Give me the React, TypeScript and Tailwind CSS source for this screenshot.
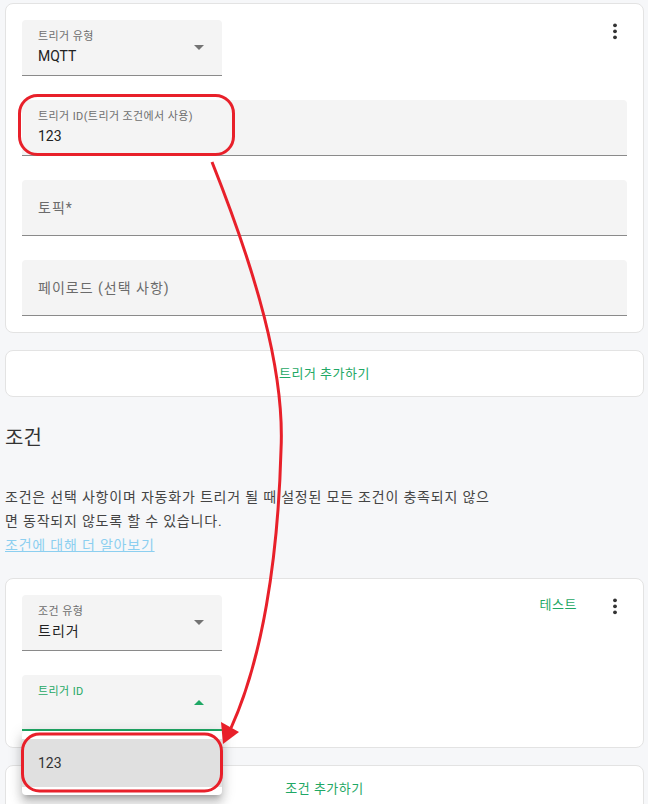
const green = "text-[#1fa865]";

function Kebab() {
  return (
    <svg width="24" height="24" viewBox="0 0 24 24" className="-mt-px shrink-0">
      <circle cx="12" cy="6.3" r="1.9" fill="#333" />
      <circle cx="12" cy="12.3" r="1.9" fill="#333" />
      <circle cx="12" cy="18.3" r="1.9" fill="#333" />
    </svg>
  );
}

function Caret({ up = false, color = "#737373" }: { up?: boolean; color?: string }) {
  return (
    <svg width="10" height="5" viewBox="0 0 10 5" className="shrink-0">
      <polygon points={up ? "0,5 10,5 5,0" : "0,0 10,0 5,5"} fill={color} />
    </svg>
  );
}

function SelectField({ label, value, ko = false }: { label: string; value: string; ko?: boolean }) {
  return (
    <div className="flex h-[56px] w-[200px] items-center justify-between rounded-t-[4px] border-b border-[#8a8a8a] bg-[#f4f4f4] pl-4 pr-[18px]">
      <div className="self-start pt-[10px]">
        <div className="text-[11px] leading-[13px] tracking-[0.4px] text-[#6e6e6e]">{label}</div>
        <div className={`mt-[3px] text-[14px] leading-[20px] text-[#222] ${ko ? "tracking-[1px]" : ""}`}>{value}</div>
      </div>
      <Caret />
    </div>
  );
}

function PlaceholderField({ placeholder }: { placeholder: string }) {
  return (
    <div className="flex h-[56px] w-full items-center rounded-t-[4px] border-b border-[#8a8a8a] bg-[#f4f4f4] px-4">
      <div className="text-[14px] leading-[20px] tracking-[1px] text-[#6b6b6b]">{placeholder}</div>
    </div>
  );
}

function AddCard({ text }: { text: string }) {
  return (
    <div className="mt-[17px] flex h-[47px] items-center justify-center rounded-[8px] border border-[#e3e3e3] bg-white">
      <span className={`text-[13px] tracking-[0.5px] ${green}`}>{text}</span>
    </div>
  );
}

export default function App() {
  return (
    <div className="relative h-[804px] w-[648px] overflow-hidden bg-[#f6f7f9] font-[Roboto,'Noto_Sans_CJK_KR',sans-serif]">
      <div className="pl-[5px] pr-[4px] pt-[3px]">
        {/* trigger card */}
        <div className="rounded-[8px] border border-[#e3e3e3] bg-white p-4">
          <div className="flex items-start justify-between">
            <SelectField label="트리거 유형" value="MQTT" />
            <Kebab />
          </div>
          <div className="mt-6 space-y-6">
            <div className="flex h-[56px] w-full flex-col rounded-t-[4px] border-b border-[#8a8a8a] bg-[#f4f4f4] px-4 pt-[10px]">
              <div className="text-[11px] leading-[13px] tracking-[0.4px] text-[#6e6e6e]">트리거 ID(트리거 조건에서 사용)</div>
              <div className="mt-[3px] text-[14px] leading-[20px] text-[#222]">123</div>
            </div>
            <PlaceholderField placeholder="토픽*" />
            <PlaceholderField placeholder="페이로드 (선택 사항)" />
          </div>
        </div>

        <AddCard text="트리거 추가하기" />

        <h2 className="mt-[27px] text-[20px] font-normal leading-[28px] text-[#333]">조건</h2>
        <p className="mt-[33px] w-[492px] text-[14px] leading-[24px] tracking-[0.8px] text-[#444]">
          조건은 선택 사항이며 자동화가 트리거 될 때 설정된 모든 조건이 충족되지 않으면 동작되지 않도록 할 수 있습니다.
        </p>
        <a className="block text-[14px] leading-[24px] tracking-[0.8px] text-[#8ccff0] underline">조건에 대해 더 알아보기</a>

        {/* condition card */}
        <div className="mt-[21px] rounded-[8px] border border-[#e3e3e3] bg-white p-4">
          <div className="flex items-start justify-between">
            <SelectField label="조건 유형" value="트리거" ko />
            <div className="flex items-start gap-[26px]">
              <span className={`text-[13px] leading-[20px] tracking-[0.5px] ${green}`}>테스트</span>
              <Kebab />
            </div>
          </div>
          <div className="relative mt-6 w-[200px]">
            <div className="flex h-[56px] w-[200px] items-center justify-between rounded-t-[4px] border-b-2 border-[#1fa865] bg-[#f4f4f4] pl-4 pr-[18px]">
              <div className="self-start pt-[10px] text-[11px] leading-[13px] tracking-[0.4px] text-[#1fa865]">트리거 ID</div>
              <Caret up color="#1fa865" />
            </div>
            <div className="absolute left-0 top-full z-10 w-[200px] rounded-[4px] bg-white py-2 shadow-[0_5px_5px_-3px_rgba(0,0,0,0.2),0_8px_10px_1px_rgba(0,0,0,0.14),0_3px_14px_2px_rgba(0,0,0,0.12)]">
              <div className="flex h-[48px] items-center bg-[#e0e0e0] px-4 text-[14px] text-[#333]">123</div>
            </div>
          </div>
        </div>

        <AddCard text="조건 추가하기" />
      </div>

      {/* red annotations */}
      <svg className="pointer-events-none absolute left-0 top-0 z-20" width="648" height="804" viewBox="0 0 648 804">
        <rect x="19.5" y="95.5" width="214" height="59" rx="18" fill="none" stroke="#e8202a" strokeWidth="3" />
        <path d="M212 162 C 255 270, 285 370, 281 450 C 278 560, 262 660, 231 728" fill="none" stroke="#e8202a" strokeWidth="3" />
        <polygon points="221,722 239,732 223,744" fill="#e8202a" />
        <rect x="22.5" y="734" width="199" height="57" rx="17" fill="none" stroke="#e8202a" strokeWidth="3" />
      </svg>
    </div>
  );
}
